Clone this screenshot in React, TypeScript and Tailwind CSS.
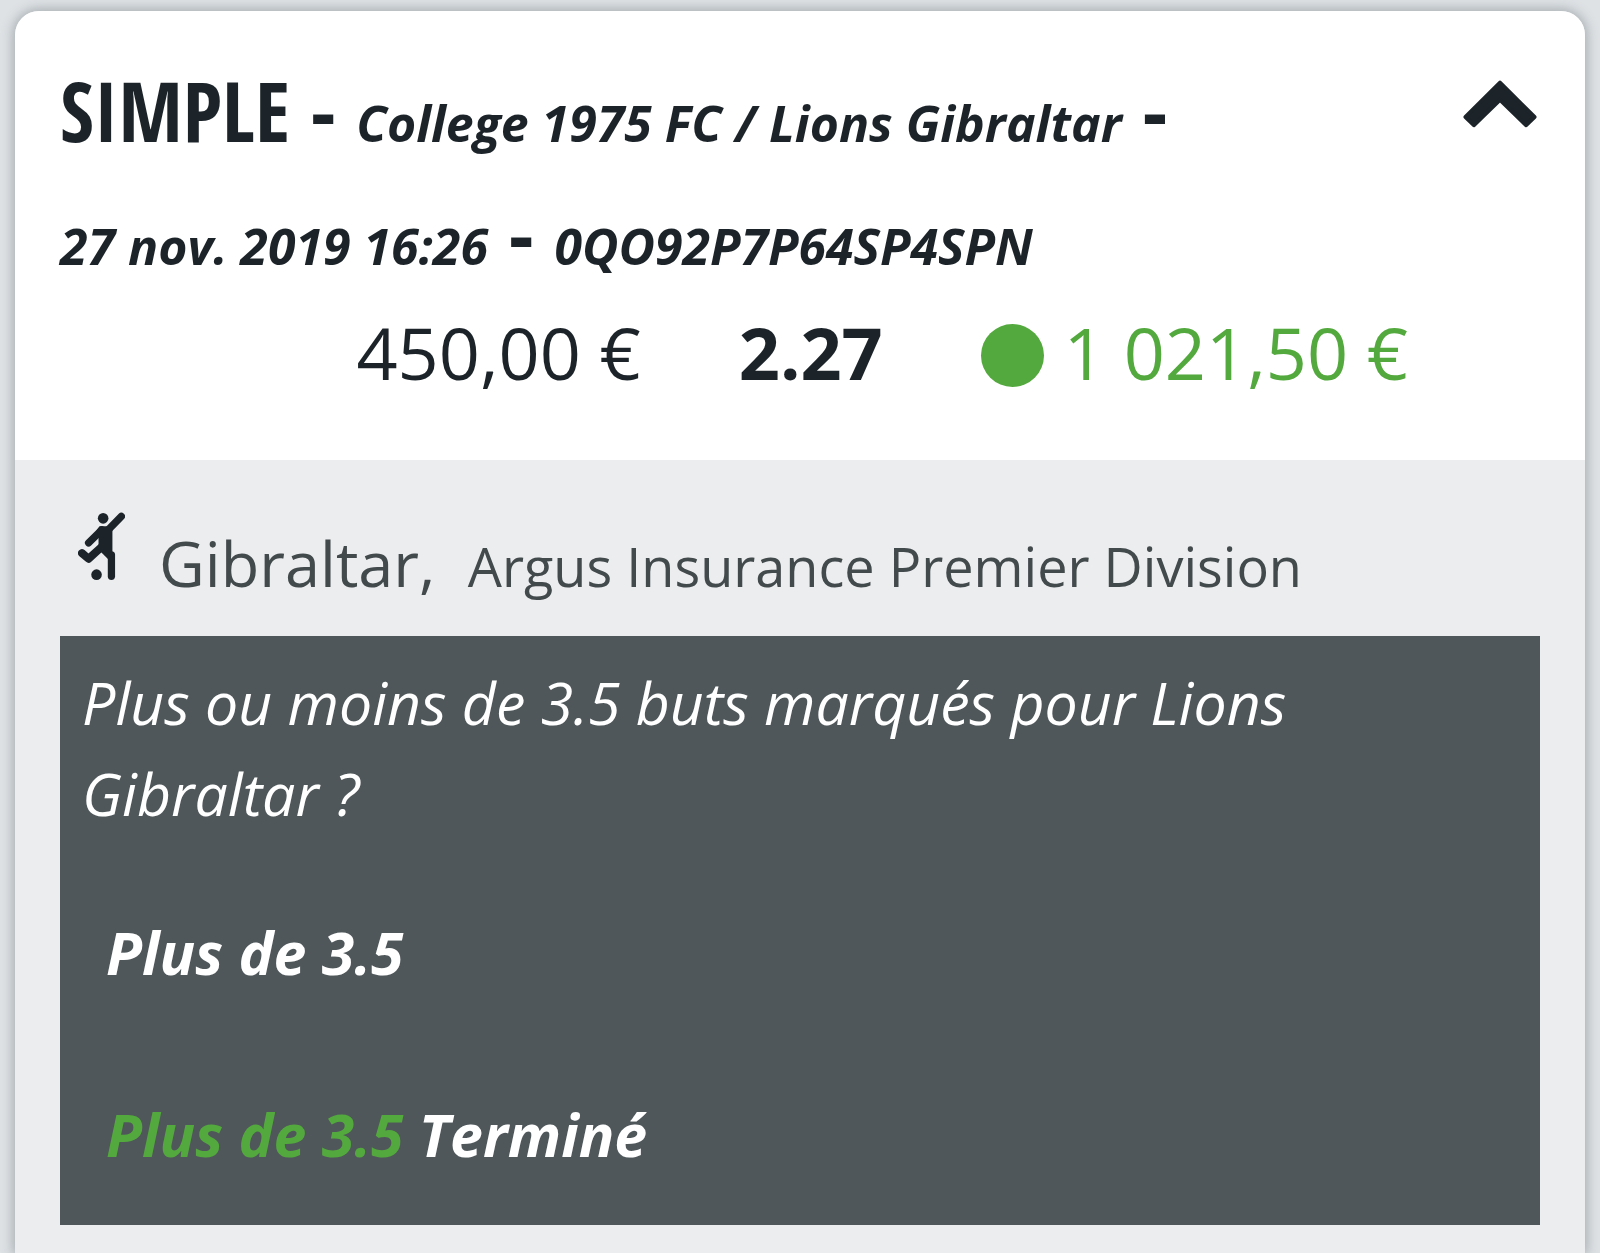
import { useState } from "react";

type AmountProps = {
    stake: string;
    odds: string;
    payout: string;
};

type SelectionProps = {
    question: string;
    pick: string;
    result: string;
    status: string;
};

function ChevronIcon({ open }: { open: boolean }) {
    return (
        <svg
            viewBox="0 0 74 48"
            className={open ? "w-[74px] h-12" : "w-[74px] h-12 rotate-180"}
            fill="currentColor"
            stroke="currentColor"
            strokeWidth="4"
            strokeLinejoin="round"
            aria-hidden="true"
        >
            <path d="M37 2.6 L71.5 37 L63.2 45.2 L37 19.8 L10.8 45.2 L2.5 37 Z" />
        </svg>
    );
}

function FootballIcon() {
    return (
        <svg
            viewBox="54 66 142 206"
            className="w-[47px] h-[69px] shrink-0"
            fill="none"
            stroke="currentColor"
            strokeLinecap="round"
            strokeLinejoin="round"
            aria-hidden="true"
        >
            <circle cx="130" cy="84" r="16" fill="currentColor" stroke="none" />
            <circle cx="110" cy="254" r="16" fill="currentColor" stroke="none" />
            <path d="M146 118 L185 78" strokeWidth="22" />
            <path d="M126 119 L86 158" strokeWidth="22" />
            <path d="M66 189 L86 206 L128 168" strokeWidth="24" />
            <path d="M155 194 V259" strokeWidth="22" />
            <path
                d="M119 108 H142 L158 108 V186 L166 194 L146 208 L124 186 L110 176 L116 164 V140 L110 120 Z"
                fill="currentColor"
                stroke="none"
            />
        </svg>
    );
}

function Amounts({ stake, odds, payout }: AmountProps) {
    return (
        <div className="flex flex-wrap justify-end items-center gap-x-[98px] mt-2 pr-[132px] text-[72px] leading-[99px]">
            <span>{stake}</span>
            <span className="font-bold">{odds}</span>
            <span className="flex items-center gap-5 text-[#53a93d]">
                <span className="size-[63px] mt-1.5 rounded-full bg-[#53a93d]" />
                {payout}
            </span>
        </div>
    );
}

function Selection({ question, pick, result, status }: SelectionProps) {
    return (
        <div className="bg-[#4f575a] text-white italic px-[22px] pt-[21px] pb-[45px] text-[59px] leading-[91px]">
            <p>{question}</p>
            <div className="px-6 pt-[68px] font-bold">
                <p>{pick}</p>
                <p className="pt-[91px]">
                    <span className="text-[#53a93d]">{result}</span> {status}
                </p>
            </div>
        </div>
    );
}

export default function App() {
    const [open, setOpen] = useState(true);

    return (
        <main className="min-h-screen flex flex-col bg-[#dee2e5] pt-[11px] px-[15px] font-['Open_Sans',sans-serif] text-[#1c242a]">
            <article className="grow flex flex-col rounded-t-[24px] bg-[#ecedef] shadow-[0_0_12px_2px_rgba(80,90,95,0.4)]">
                <header className="rounded-t-[24px] bg-white px-[45px] pt-[38px] pb-[58px]">
                    <div className="flex items-start">
                        <h1 className="flex-1 font-['Open_Sans_Condensed','Open_Sans',sans-serif] font-bold text-[82px] leading-[123px]">
                            SIMPLE -{" "}
                            <em className="font-['Open_Sans',sans-serif] text-[50px] leading-none">
                                College 1975 FC / Lions Gibraltar
                            </em>{" "}
                            -{" "}
                            <span className="inline-block">
                                <em className="font-['Open_Sans',sans-serif] text-[50px] leading-none">
                                    27 nov. 2019 16:26
                                </em>{" "}
                                -{" "}
                                <em className="font-['Open_Sans',sans-serif] text-[50px] leading-none">
                                    0QO92P7P64SP4SPN
                                </em>
                            </span>
                        </h1>
                        <button
                            type="button"
                            aria-label="Détails du pari"
                            aria-expanded={open}
                            onClick={() => setOpen((prev) => !prev)}
                            className="mt-[31px] mr-[3px]"
                        >
                            <ChevronIcon open={open} />
                        </button>
                    </div>
                    <Amounts stake="450,00 €" odds="2.27" payout="1 021,50 €" />
                </header>
                {open && (
                    <section className="px-[45px] pt-[52px] pb-7">
                        <div className="flex items-start pl-[18px] pb-7">
                            <FootballIcon />
                            <h2 className="pl-[34px] pt-1.5 text-[63px] leading-[90px] text-[#434a4c]">
                                Gibraltar,{" "}
                                <span className="pl-4 text-[54px] leading-none">
                                    Argus Insurance Premier Division
                                </span>
                            </h2>
                        </div>
                        <Selection
                            question="Plus ou moins de 3.5 buts marqués pour Lions Gibraltar ?"
                            pick="Plus de 3.5"
                            result="Plus de 3.5"
                            status="Terminé"
                        />
                    </section>
                )}
            </article>
        </main>
    );
}
